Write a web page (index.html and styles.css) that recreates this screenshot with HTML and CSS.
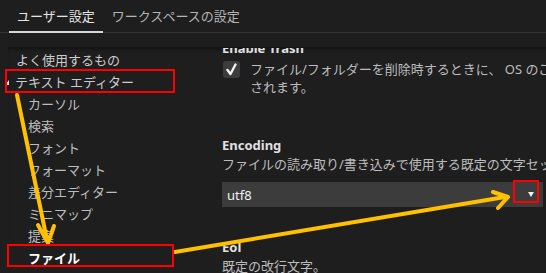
FILE: index.html
```html
<!DOCTYPE html>
<html lang="ja">
<head>
    <meta charset="UTF-8">
    <meta name="viewport" content="width=device-width, initial-scale=1.0">
    <title>設定</title>
    <link rel="stylesheet" href="styles.css">
</head>
<body>
    <div class="page">
        <div class="tabs">
            <div class="tab active">ユーザー設定</div>
            <div class="tab">ワークスペースの設定</div>
        </div>

        <div class="main">
            <ul class="toc">
                <li class="toc-item">よく使用するもの</li>
                <li class="toc-item expanded">
                    <svg class="twisty" width="4" height="5" viewBox="0 0 4 5"><path d="M4 0 L4 5 L0 5 Z" fill="#e8e8e8"/></svg>
                    テキスト エディター
                </li>
                <li class="toc-item child">カーソル</li>
                <li class="toc-item child">検索</li>
                <li class="toc-item child">フォント</li>
                <li class="toc-item child">フォーマット</li>
                <li class="toc-item child">差分エディター</li>
                <li class="toc-item child">ミニマップ</li>
                <li class="toc-item child">提案</li>
                <li class="toc-item child selected">ファイル</li>
            </ul>

            <div class="settings">
                <div class="settings-scroll">
                    <div class="setting">
                        <div class="setting-title">Enable Trash</div>
                        <div class="setting-bool">
                            <span class="checkbox">
                                <svg width="13" height="13" viewBox="0 0 13 13"><path d="M2.5 7 L5.5 11 L10.5 1.5" fill="none" stroke="#f2f2f2" stroke-width="2.4" stroke-linecap="round" stroke-linejoin="round"/></svg>
                            </span>
                            <div class="setting-desc">ファイル/フォルダーを削除時するときに、 OS のごみ箱に移動します。無効にすると、ファイル/フォルダーは完全に削除<br>されます。</div>
                        </div>
                    </div>

                    <div class="setting">
                        <div class="setting-title">Encoding</div>
                        <div class="setting-desc">ファイルの読み取り/書き込みで使用する既定の文字セット エンコーディング。</div>
                        <div class="select">
                            <span>utf8</span>
                            <svg width="6" height="5" viewBox="0 0 6 5"><path d="M0 0 L6 0 L3 5 Z" fill="#f0f0f0"/></svg>
                        </div>
                    </div>

                    <div class="setting">
                        <div class="setting-title">Eol</div>
                        <div class="setting-desc">既定の改行文字。</div>
                    </div>
                </div>
            </div>
        </div>

        <!-- annotations drawn over the screenshot -->
        <svg class="annotations" width="546" height="273" viewBox="0 0 546 273">
            <g fill="none" stroke="#ffc000" stroke-width="4" stroke-linecap="round" stroke-linejoin="round">
                <line x1="17" y1="95" x2="47" y2="240"/>
                <polyline points="38,225 48,243 54,226"/>
                <line x1="175" y1="252" x2="505" y2="197"/>
                <polyline points="493,192 508,197 498,208"/>
            </g>
            <g fill="none" stroke="#ff0000" stroke-width="2">
                <rect x="6" y="70" width="168" height="22"/>
                <rect x="8" y="245" width="165" height="21"/>
                <rect x="514" y="181" width="24" height="21"/>
            </g>
        </svg>
    </div>
</body>
</html>
```

FILE: styles.css
```css
* {
    margin: 0;
    padding: 0;
    box-sizing: border-box;
}

body {
    background-color: #1e1e1e;
    font-family: "Noto Sans", "Noto Sans CJK JP", sans-serif;
    font-size: 13px;
    color: #cccccc;
    overflow: hidden;
}

.page {
    position: relative;
    width: 546px;
    height: 273px;
    overflow: hidden;
}

.tabs {
    display: flex;
    padding-left: 9px;
    height: 33px;
    border-bottom: 1px solid #333333;
}

.tab {
    padding: 0 8px;
    line-height: 32px;
    color: #b4b4b4;
    margin-right: 1px;
}

.tab.active {
    color: #e4e4e4;
    border-bottom: 2px solid #d8d8d8;
    height: 33px;
}

.main {
    display: flex;
    margin-top: 14px;
    margin-left: 8px;
    height: 226px;
    border-top: 1px solid #141414;
    box-shadow: inset 0 3px 3px -2px #111111;
}

.toc {
    list-style: none;
    width: 214px;
    flex-shrink: 0;
}

.toc-item {
    display: flex;
    align-items: center;
    height: 22px;
    padding-left: 8px;
    white-space: nowrap;
    color: #cccccc;
}

.toc-item.expanded {
    margin-left: -3px;
    padding-left: 0;
}

.twisty {
    margin-right: 6px;
    margin-top: 2px;
}

.toc-item.child {
    padding-left: 20px;
    color: #bdbdbd;
}

.toc-item.selected {
    font-weight: bold;
    color: #ffffff;
}

.settings {
    flex: 1;
    overflow: hidden;
}

.settings-scroll {
    margin-top: -9px;
}

.setting {
    padding-bottom: 31px;
}

.setting-title {
    font-weight: bold;
    line-height: 18px;
    color: #e0e0e0;
    white-space: nowrap;
}

.setting-desc {
    line-height: 18px;
    margin-top: 1px;
    color: #bcbcbc;
    white-space: nowrap;
}

.setting-bool {
    display: flex;
    margin-top: 4px;
    margin-bottom: 9px;
}

.setting-bool .setting-desc {
    margin-top: -1px;
}

.checkbox {
    width: 17px;
    height: 17px;
    margin-left: 1px;
    margin-right: 10px;
    flex-shrink: 0;
    display: flex;
    align-items: center;
    justify-content: center;
    background: #3c3c3c;
    border-radius: 3px;
}

.select {
    display: flex;
    align-items: center;
    justify-content: space-between;
    width: 321px;
    height: 25px;
    margin-top: 9px;
    padding: 0 9px 0 5px;
    background: #3c3c3c;
    color: #f0f0f0;
}

.annotations {
    position: absolute;
    top: 0;
    left: 0;
    pointer-events: none;
}
```
